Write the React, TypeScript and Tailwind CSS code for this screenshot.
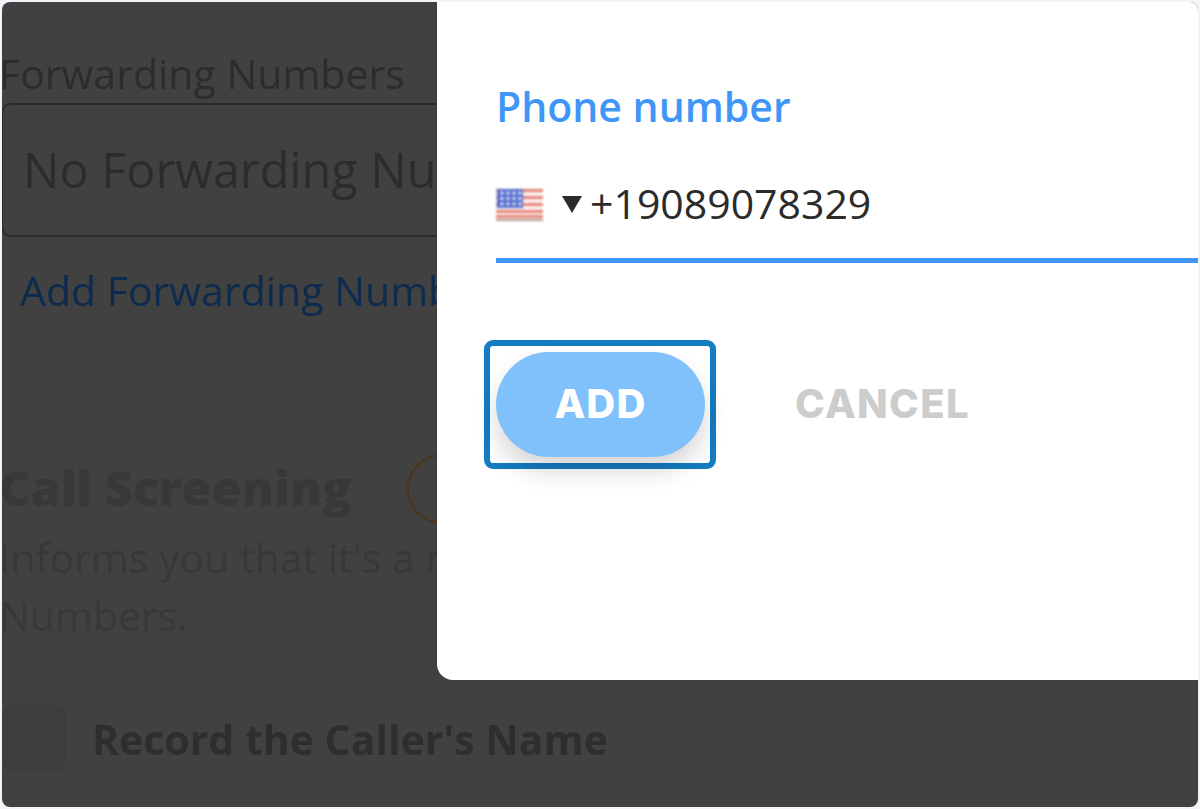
const openSans = '[font-family:"Open_Sans","Noto_Sans",sans-serif]';

function UsFlag() {
  return (
    <svg viewBox="0 0 47 33" className="mt-[3px] block h-[33px] w-[47px] blur-[0.8px]">
      <rect width="47" height="33" fill="#f8efec" />
      {[1, 8, 15, 22, 27].map((y) => (
        <rect key={y} y={y} width="47" height="3" fill="#e9877b" />
      ))}
      <rect y="31" width="47" height="2" fill="#b59a90" />
      <rect x="1" y="1" width="26" height="19" fill="#5a70cf" />
      {[5, 10.5, 16].map((y) =>
        [6, 12, 18, 24].map((x) => <circle key={`${x}-${y}`} cx={x} cy={y} r="1.8" fill="#d3daf3" />),
      )}
    </svg>
  );
}

export default function App() {
  return (
    <div className="h-[809px] w-[1200px] overflow-hidden bg-[#f3f3f9] p-[2px]">
      <div className={`relative h-[805px] overflow-hidden rounded-[8px] bg-[#414141] ${openSans}`}>
        <div className="-ml-[3px] pt-[46px] blur-[0.6px]">
          <p className="text-[41px] leading-[50px] text-[#2c2c2c]">Forwarding Numbers</p>
          <div className="ml-[2px] mt-[5px] flex h-[134px] w-[600px] items-center rounded-[10px] border-2 border-[#2b2b2b] pb-[2px] pl-[20px]">
            <span className="whitespace-nowrap text-[48.5px] text-[#2c2c2c]">No Forwarding Numbers</span>
          </div>
          <p className="ml-[21px] mt-[25px] whitespace-nowrap text-[41px] leading-[56px] text-[#0c2b4e]">
            Add Forwarding Numbers
          </p>
          <div className="mt-[132px] flex items-center">
            <span className="whitespace-nowrap text-[48.5px] font-extrabold leading-[60px] text-[#383838]">Call Screening</span>
            <span className="ml-[55px] mt-[4px] h-[70px] w-[70px] shrink-0 rounded-full border-2 border-[#4d3318]" />
          </div>
          <p className="mt-[4px] w-[1500px] text-[41px] leading-[58px] text-[#383838]">
            Informs you that it's a recorded call from one of your Forwarding
            <br />
            Numbers.
          </p>
          <div className="ml-[3px] mt-[60px] flex items-center gap-[26px]">
            <span className="h-[68px] w-[64px] rounded-[14px] bg-[#3d3d3d]" />
            <span className="mt-[2px] text-[41px] font-bold leading-[56px] text-[#2e2e2e]">Record the Caller's Name</span>
          </div>
        </div>

        <div className="absolute left-[435px] right-0 top-0 h-[678px] rounded-bl-[16px] bg-white pl-[59px] pt-[79px]">
          <p className="text-[41px] font-semibold leading-[50px] text-[#4096f6]">Phone number</p>
          <div className="mt-[42px] flex h-[60px] items-center">
            <UsFlag />
            <span className="ml-[19px] mt-[2px] h-0 w-0 border-x-[10px] border-t-[17px] border-x-transparent border-t-[#2b2b2b]" />
            <span className="ml-[8px] text-[41px] leading-[60px] text-[#2b2b2b]">+19089078329</span>
          </div>
          <div className="mt-[25px] h-[5px] bg-[#4096f6]" />
          <div className="-ml-[12px] mt-[77px] flex items-center">
            <div className="rounded-[9px] border-[6px] border-[#137cc2] py-[6px] pl-[6px] pr-[5px]">
              <button className="block h-[105px] w-[209px] rounded-full bg-[#80c1fb] pb-[2px] text-[40px] font-extrabold tracking-[1.2px] text-white shadow-[0_14px_24px_rgba(0,0,0,0.16)] [font-family:Inter,sans-serif]">
                ADD
              </button>
            </div>
            <span className="mb-[2px] ml-[79px] text-[40px] font-extrabold tracking-[1.4px] text-[#cccccc] [font-family:Inter,sans-serif]">CANCEL</span>
          </div>
        </div>
      </div>
    </div>
  );
}
